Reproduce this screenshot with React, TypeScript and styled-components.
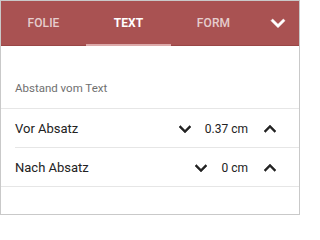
import styled, { createGlobalStyle } from "styled-components";

const GlobalStyle = createGlobalStyle`
  html, body {
    margin: 0;
    padding: 0;
    background: #fff;
  }
  * {
    box-sizing: border-box;
  }
`

const Panel = styled.div`
  width: 300px;
  height: 215px;
  border: 1px solid #c9c9c9;
  font-family: Roboto, "Liberation Sans", sans-serif;
  background: #fff;
  overflow: hidden;
`

const TabBar = styled.div`
  display: flex;
  height: 45px;
  background: #a95252;
  border-bottom: 1px solid #9a4646;
`

const Tab = styled.div<{ $active?: boolean }>`
  position: relative;
  width: 85px;
  display: flex;
  align-items: center;
  justify-content: center;
  padding-bottom: 1px;
  font-size: 12px;
  font-weight: ${p => (p.$active ? 700 : 500)};
  letter-spacing: 0.1px;
  color: ${p => (p.$active ? "#ffffff" : "rgba(255,255,255,0.72)")};
  &::after {
    content: "";
    display: ${p => (p.$active ? "block" : "none")};
    position: absolute;
    left: 0;
    right: 0;
    bottom: -1px;
    height: 2px;
    background: #dca9a9;
  }
`

const MoreButton = styled.div`
  flex: 1;
  display: flex;
  align-items: center;
  justify-content: center;
`

const SectionLabel = styled.div`
  height: 63px;
  display: flex;
  align-items: flex-end;
  padding: 0 14px 13px;
  font-size: 11.5px;
  color: #707070;
  border-bottom: 1px solid #e6e6e6;
`

const Row = styled.div<{ $inset?: boolean }>`
  position: relative;
  height: 39px;
  display: flex;
  align-items: center;
  padding: 0 17px 0 14px;
  &::after {
    content: "";
    position: absolute;
    left: ${p => (p.$inset ? "14px" : "0")};
    right: 0;
    bottom: 0;
    height: 1px;
    background: #e6e6e6;
  }
`

const RowLabel = styled.div`
  flex: 1;
  font-size: 13px;
  color: #222;
`

const Stepper = styled.div`
  display: flex;
  align-items: center;
  gap: 8px;
`

const Value = styled.div`
  font-size: 12px;
  color: #222;
  margin-right: 2px;
`

const Chevron = ({ up, size = 24, color = "#222" }: { up?: boolean; size?: number; color?: string }) => (
  <svg width={size} height={size} viewBox="0 0 24 24" style={{ transform: up ? "rotate(180deg)" : undefined }}>
    <path fill={color} d="M16.59 8.59L12 13.17 7.41 8.59 6 10l6 6 6-6z" stroke={color} strokeWidth="0.5" />
  </svg>
)

const rows = [
  { label: "Vor Absatz", value: "0.37 cm", inset: true },
  { label: "Nach Absatz", value: "0 cm", inset: false },
]

const App = () => {
  return (
    <Panel>
      <GlobalStyle />
      <TabBar>
        <Tab>FOLIE</Tab>
        <Tab $active>TEXT</Tab>
        <Tab>FORM</Tab>
        <MoreButton>
          <Chevron size={28} color="#fff" />
        </MoreButton>
      </TabBar>
      <SectionLabel>Abstand vom Text</SectionLabel>
      {rows.map(r => (
        <Row key={r.label} $inset={r.inset}>
          <RowLabel>{r.label}</RowLabel>
          <Stepper>
            <Chevron />
            <Value>{r.value}</Value>
            <Chevron up />
          </Stepper>
        </Row>
      ))}
    </Panel>
  );
}
export default App;
